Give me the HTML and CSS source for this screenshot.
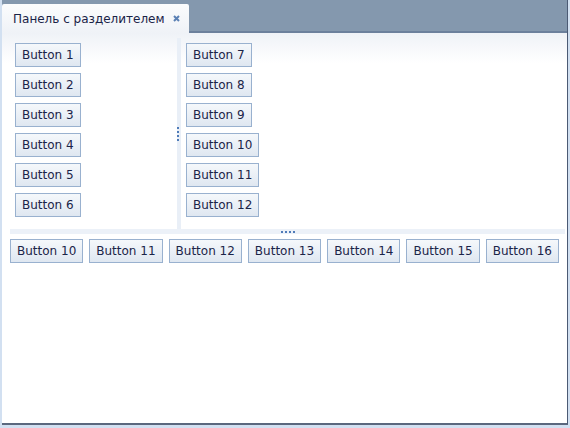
FILE: index.html
```html
<!DOCTYPE html>
<html>
<head>
<meta charset="utf-8">
<link rel="stylesheet" href="styles.css">
</head>
<body>
<div class="panel">
  <div class="tabstrip">
    <div class="tab">
      <span class="tab-title">Панель с разделителем</span>
      <svg class="tab-close" width="7" height="7" viewBox="0 0 7 7"><path d="M1 1L6 6M6 1L1 6" stroke="#5a80b4" stroke-width="2"/></svg>
    </div>
  </div>
  <div class="content">
    <div class="top">
      <div class="pane left">
        <button class="btn">Button 1</button>
        <button class="btn">Button 2</button>
        <button class="btn">Button 3</button>
        <button class="btn">Button 4</button>
        <button class="btn">Button 5</button>
        <button class="btn">Button 6</button>
      </div>
      <div class="vsplit"><span class="vdots"></span></div>
      <div class="pane right">
        <button class="btn">Button 7</button>
        <button class="btn">Button 8</button>
        <button class="btn">Button 9</button>
        <button class="btn">Button 10</button>
        <button class="btn">Button 11</button>
        <button class="btn">Button 12</button>
      </div>
    </div>
    <div class="hsplit"><span class="hdots"></span></div>
    <div class="bottom">
      <button class="btn">Button 10</button>
      <button class="btn">Button 11</button>
      <button class="btn">Button 12</button>
      <button class="btn">Button 13</button>
      <button class="btn">Button 14</button>
      <button class="btn">Button 15</button>
      <button class="btn">Button 16</button>
    </div>
  </div>
</div>
</body>
</html>
```
FILE: styles.css
```css
html, body {
  margin: 0;
  padding: 0;
  width: 570px;
  height: 428px;
  overflow: hidden;
  background: #d2e0f1;
  font-family: "DejaVu Sans", Verdana, sans-serif;
  font-size: 12px;
  color: #1b2448;
}
.panel {
  margin-left: 2px;
  width: 565px;
  height: 423px;
  background: #ffffff;
  border-right: 1px solid #4b5a74;
  border-bottom: 2px solid #5b687e;
  display: flex;
  flex-direction: column;
}
.tabstrip {
  height: 31px;
  background: #8498ae;
  border-bottom: 2px solid #6c809c;
  display: flex;
  align-items: flex-end;
  box-sizing: content-box;
}
.tab {
  height: 29px;
  width: 187px;
  margin-bottom: -2px;
  box-sizing: border-box;
  background: linear-gradient(#fbfcfd, #eff2f7);
  border-radius: 2px 2px 0 0;
  display: flex;
  align-items: center;
  padding: 0 0 0 11px;
  gap: 8px;
}
.tab-title {
  white-space: nowrap;
  color: #1a2347;
}
.tab-close {
  display: block;
}
.content {
  flex: 1;
  padding: 5px 2px 0 8px;
  background: linear-gradient(#eff2f7, #ffffff 30px);
  display: flex;
  flex-direction: column;
}
.top {
  display: flex;
  height: 191px;
}
.pane {
  display: flex;
  flex-direction: column;
  align-items: flex-start;
  gap: 6px;
  padding: 5px 0 0 5px;
}
.left {
  width: 162px;
}
.right {
  flex: 1;
  padding-left: 5px;
}
.vsplit {
  width: 4px;
  background: #e9eff7;
  display: flex;
  align-items: center;
  justify-content: center;
}
.vdots {
  width: 2px;
  height: 14px;
  background: repeating-linear-gradient(#4f7bb8 0 2px, transparent 2px 4px);
  margin-left: -2px;
}
.hsplit {
  height: 5px;
  background: #ecf1f8;
  display: flex;
  align-items: center;
  justify-content: center;
}
.hdots {
  width: 14px;
  height: 2px;
  background: repeating-linear-gradient(90deg, #4f7bb8 0 2px, transparent 2px 4px);
}
.bottom {
  display: flex;
  gap: 6px;
  padding-top: 5px;
}
.btn {
  height: 24px;
  box-sizing: border-box;
  border: 1px solid #99b1cf;
  border-radius: 0;
  background: linear-gradient(#f5f8fb, #dfe7f1);
  font-family: inherit;
  font-size: 12px;
  color: #1b2448;
  padding: 0 6px;
  margin: 0;
  line-height: 22px;
  white-space: nowrap;
}
```
